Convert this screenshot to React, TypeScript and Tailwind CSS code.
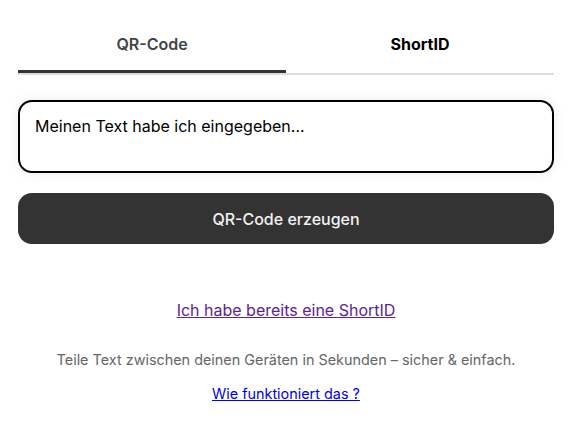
import React from "react";

export default function App() {
  return (
    <div className="w-[575px] h-[422px] bg-white pt-[28px] font-['Inter',sans-serif]">
      <div className="ml-[18px] w-[536px]">
        <div className="flex border-b-2 border-[#dddddd]">
          <div className="flex-1 flex flex-col items-center">
            <div className="h-[42px] text-[16px] font-semibold text-[#444444] leading-[32px]">QR-Code</div>
            <div className="w-full h-[3px] bg-[#333333] mb-[-1px]" />
          </div>
          <div className="flex-1 flex flex-col items-center">
            <div className="h-[42px] text-[16px] font-bold text-black leading-[32px]">ShortID</div>
            <div className="w-full h-[3px]" />
          </div>
        </div>
        <textarea
          className="mt-[25px] block w-full h-[73px] border-2 border-black rounded-[14px] px-[15px] pt-[13px] pb-[14px] text-[16px] text-black resize-none outline-none shadow-[0_0_12px_rgba(0,0,0,0.08)] leading-[22px]"
          defaultValue="Meinen Text habe ich eingegeben..."
        />
        <button className="mt-[20px] w-full h-[51px] rounded-[14px] bg-[#333333] text-[#f2f2f2] text-[16px] font-medium">
          QR-Code erzeugen
        </button>
        <div className="mt-[54px] text-center">
          <a href="#" className="text-[16px] text-[#5b2395] underline">Ich habe bereits eine ShortID</a>
        </div>
        <p className="mt-[27px] text-center text-[14.4px] text-[#666666]">
          Teile Text zwischen deinen Geräten in Sekunden – sicher &amp; einfach.
        </p>
        <div className="mt-[10px] text-center">
          <a href="#" className="text-[14.4px] text-[#0000ee] underline">Wie funktioniert das ?</a>
        </div>
      </div>
    </div>
  );
}
